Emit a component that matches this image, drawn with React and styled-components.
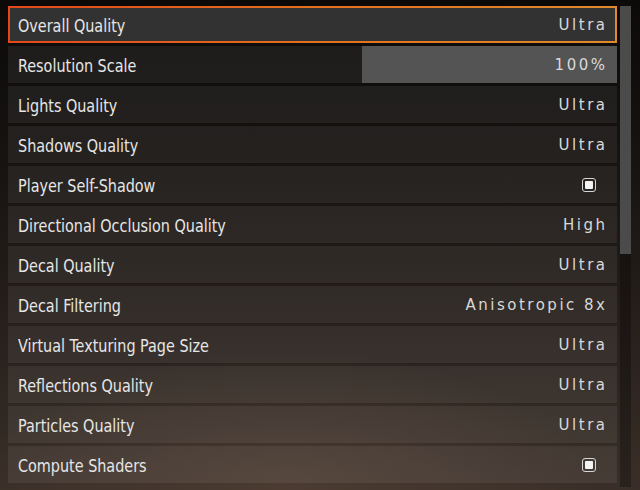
import styled, { createGlobalStyle } from "styled-components";

const GlobalStyle = createGlobalStyle`
  html, body {
    margin: 0;
    padding: 0;
    height: 100%;
  }
  body {
    background: #0d0b0a;
  }
`;

const StScreen = styled.div`
  width: 640px;
  height: 490px;
  box-sizing: border-box;
  padding: 6px 9px 3px 8px;
  display: flex;
  gap: 3px;
  background:
    radial-gradient(ellipse 70% 40% at 45% 100%, rgba(90, 70, 58, 0.55), rgba(0, 0, 0, 0) 70%),
    linear-gradient(to bottom, #0c0a09 0%, #151210 30%, #261f1b 65%, #3a2f28 100%);
  overflow: hidden;
`;

const StList = styled.div`
  width: 609px;
  display: flex;
  flex-direction: column;
  gap: 3px;
`;

const StRow = styled.div`
  position: relative;
  height: 37px;
  flex-shrink: 0;
  box-sizing: border-box;
  display: flex;
  align-items: center;
  justify-content: space-between;
  background: ${(p) => (p.$selected ? "#333232" : "rgba(255, 255, 255, 0.065)")};
  border: ${(p) => (p.$selected ? "2px solid transparent" : "none")};
  border-image: ${(p) =>
    p.$selected ? "linear-gradient(to right, #e4481a, #e4701e 50%, #e08a2c) 1" : "none"};
  padding-left: ${(p) => (p.$selected ? "8px" : "10px")};
  padding-right: ${(p) => (p.$selected ? "10px" : "12px")};
`;

const StLabel = styled.span`
  position: relative;
  top: 1px;
  font-family: "DejaVu Sans Condensed", "Liberation Sans", sans-serif;
  font-size: 17px;
  color: #e6e6e6;
  transform: scaleX(0.94);
  transform-origin: left center;
`;

const StValue = styled.span`
  position: relative;
  font-family: "DejaVu Sans", sans-serif;
  font-size: 15px;
  letter-spacing: 2.5px;
  margin-right: -2.5px;
  color: #d8d8d8;
`;

const StFill = styled.div`
  position: absolute;
  top: 0;
  right: 0;
  bottom: 0;
  background: #545454;
`;

const StCheck = styled.span`
  position: relative;
  width: 14px;
  height: 14px;
  box-sizing: border-box;
  border: 1.5px solid #d6d6d6;
  border-radius: 3px;
  display: flex;
  align-items: center;
  justify-content: center;
  margin-right: 9px;

  &::after {
    content: "";
    width: 8px;
    height: 8px;
    border-radius: 1px;
    background: #f4f4f4;
  }
`;

const StScrollbar = styled.div`
  width: 11px;
  display: flex;
  flex-direction: column;
  background: rgba(0, 0, 0, 0.28);
`;

const StThumb = styled.div`
  height: 248px;
  background: #4b4b4b;
`;

const settings = [
  { label: "Overall Quality", value: "Ultra", selected: true },
  { label: "Resolution Scale", value: "100%", fill: 0.419 },
  { label: "Lights Quality", value: "Ultra" },
  { label: "Shadows Quality", value: "Ultra" },
  { label: "Player Self-Shadow", check: true },
  { label: "Directional Occlusion Quality", value: "High" },
  { label: "Decal Quality", value: "Ultra" },
  { label: "Decal Filtering", value: "Anisotropic 8x" },
  { label: "Virtual Texturing Page Size", value: "Ultra" },
  { label: "Reflections Quality", value: "Ultra" },
  { label: "Particles Quality", value: "Ultra" },
  { label: "Compute Shaders", check: true },
];

function App() {
  return (
    <>
      <GlobalStyle />
      <StScreen>
        <StList>
          {settings.map((s) => (
            <StRow key={s.label} $selected={s.selected}>
              {s.fill && <StFill style={{ width: `${s.fill * 100}%` }} />}
              <StLabel>{s.label}</StLabel>
              {s.check ? <StCheck /> : <StValue>{s.value}</StValue>}
            </StRow>
          ))}
        </StList>
        <StScrollbar>
          <StThumb />
        </StScrollbar>
      </StScreen>
    </>
  );
}

export default App;
